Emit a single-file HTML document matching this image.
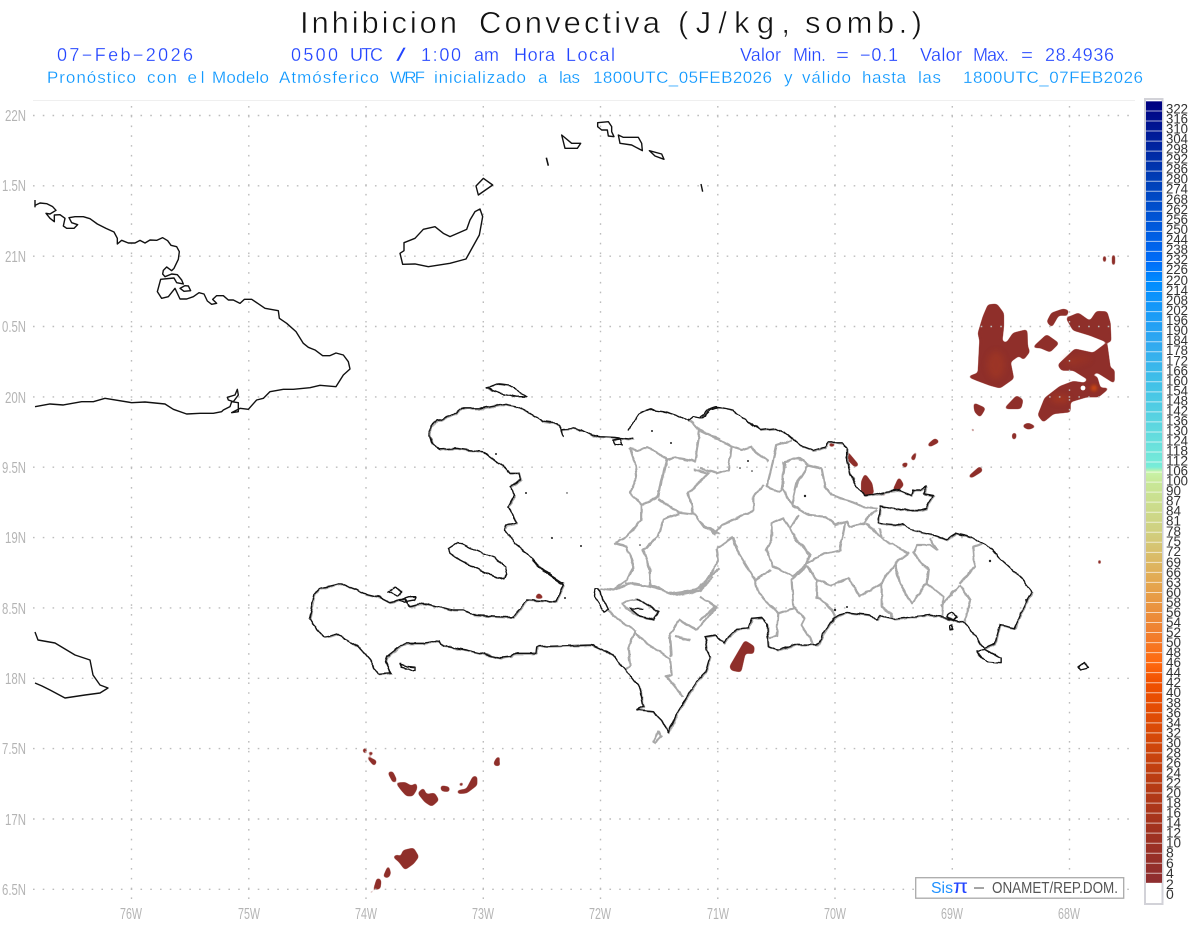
<!DOCTYPE html>
<html><head><meta charset="utf-8"><title>Inhibicion Convectiva</title>
<style>
html,body{margin:0;padding:0;background:#fff;width:1200px;height:927px;overflow:hidden}
svg{display:block;font-family:"Liberation Sans",sans-serif}
path,polygon,polyline,line{vector-effect:non-scaling-stroke}
.k{fill:none;stroke:#111;stroke-width:1.4;stroke-linejoin:round}
.g{fill:none;stroke:#a8a8a8;stroke-width:2.2;stroke-linejoin:round}
.g2{fill:none;stroke:#aaa;stroke-width:1.2;stroke-linejoin:round}
.r polygon{fill:#8f2f2a;stroke:#8f2f2a;stroke-width:1}
.ax text{fill:#b4b4b4;font-size:15.5px}
.cb text{fill:#333;font-size:14px}
.t1 text{font-size:31px;fill:#111;stroke:#fff;stroke-width:.55px}
.t2 text{font-size:18px;fill:#2244ff;stroke:#fff;stroke-width:.25px}
.t3 text{font-size:17px;fill:#0a96ff;stroke:#fff;stroke-width:.25px}
</style></head><body>
<svg width="1200" height="927" viewBox="0 0 1200 927" xmlns="http://www.w3.org/2000/svg">
<defs>
<linearGradient id="bar" x1="0" y1="0" x2="0" y2="1">
<stop offset="0" stop-color="#000080"/>
<stop offset=".103" stop-color="#0040b8"/>
<stop offset=".205" stop-color="#006cf8"/>
<stop offset=".231" stop-color="#008cff"/>
<stop offset=".308" stop-color="#30a8f0"/>
<stop offset=".359" stop-color="#40c0e8"/>
<stop offset=".468" stop-color="#78ecd8"/>
<stop offset=".474" stop-color="#c8f4a8"/>
<stop offset=".487" stop-color="#c8e898"/>
<stop offset=".551" stop-color="#d0d080"/>
<stop offset=".615" stop-color="#e4a850"/>
<stop offset=".679" stop-color="#f08030"/>
<stop offset=".718" stop-color="#ff6a10"/>
<stop offset=".744" stop-color="#f05000"/>
<stop offset=".808" stop-color="#d84a08"/>
<stop offset=".872" stop-color="#b83c14"/>
<stop offset=".936" stop-color="#a03220"/>
<stop offset="1" stop-color="#8e2e30"/>
</linearGradient>
<filter id="bl" x="-50%" y="-50%" width="200%" height="200%"><feGaussianBlur stdDeviation="3"/></filter>
<filter id="bs" x="-50%" y="-50%" width="200%" height="200%"><feGaussianBlur stdDeviation="1.5"/></filter>
<filter id="goo" filterUnits="userSpaceOnUse" x="0" y="0" width="1200" height="927" color-interpolation-filters="sRGB">
<feGaussianBlur stdDeviation="1.6"/>
<feComponentTransfer><feFuncA type="linear" slope="6" intercept="-2.2"/></feComponentTransfer>
</filter>
<filter id="wig" filterUnits="userSpaceOnUse" x="0" y="0" width="1200" height="927" color-interpolation-filters="sRGB">
<feTurbulence type="fractalNoise" baseFrequency=".11" numOctaves="2" seed="4" result="n"/>
<feDisplacementMap in="SourceGraphic" in2="n" scale="3.5" xChannelSelector="R" yChannelSelector="G"/>
</filter>
</defs>

<!-- title -->
<g class="t1">
<text x="300" y="33" textLength="157">Inhibicion</text>
<text x="479" y="33" textLength="181">Convectiva</text>
<text x="678" y="33" textLength="112">(J/kg,</text>
<text x="805" y="33" textLength="117">somb.)</text>
</g>
<g class="t2">
<text x="57" y="61" textLength="136">07−Feb−2026</text>
<text x="291" y="61" textLength="47">0500</text>
<text x="350" y="61" textLength="33">UTC</text>
<text x="396" y="61" textLength="10" lengthAdjust="spacingAndGlyphs">/</text>
<text x="421" y="61" textLength="40">1:00</text>
<text x="474" y="61" textLength="25">am</text>
<text x="514" y="61" textLength="41">Hora</text>
<text x="566" y="61" textLength="49">Local</text>
<text x="740" y="61" textLength="41">Valor</text>
<text x="793" y="61" textLength="33">Min.</text>
<text x="836" y="61" textLength="13" lengthAdjust="spacingAndGlyphs">=</text>
<text x="860" y="61" textLength="38">−0.1</text>
<text x="920" y="61" textLength="42">Valor</text>
<text x="973" y="61" textLength="36">Max.</text>
<text x="1021" y="61" textLength="12" lengthAdjust="spacingAndGlyphs">=</text>
<text x="1045" y="61" textLength="69">28.4936</text>
</g>
<g class="t3">
<text x="47" y="83" textLength="89">Pronóstico</text>
<text x="147" y="83" textLength="30">con</text>
<text x="187.5" y="83" textLength="17">el</text>
<text x="212" y="83" textLength="57">Modelo</text>
<text x="279" y="83" textLength="100">Atmósferico</text>
<text x="390" y="83" textLength="35">WRF</text>
<text x="434" y="83" textLength="92">inicializado</text>
<text x="538" y="83">a</text>
<text x="559" y="83" textLength="21">las</text>
<text x="593" y="83" textLength="179">1800UTC_05FEB2026</text>
<text x="784" y="83">y</text>
<text x="802" y="83" textLength="49">válido</text>
<text x="862" y="83" textLength="44">hasta</text>
<text x="918" y="83" textLength="23">las</text>
<text x="963" y="83" textLength="180">1800UTC_07FEB2026</text>
</g>
<line x1="33" y1="100.5" x2="1135" y2="100.5" stroke="#efefef"/>

<!-- red areas -->
<g class="r" filter="url(#goo)">
<g transform="translate(950,290) scale(.33333)">
<polygon points="56,260 85,250 90,150 85,130 100,80 115,45 140,43 160,70 160,110 155,155 170,160 190,130 230,120 232,170 238,185 220,208 208,195 180,215 190,265 150,293 120,285 80,270"/>
<polygon points="250,172 290,135 325,160 300,185 270,172"/>
<polygon points="292,95 305,70 340,58 355,62 350,75 325,75 305,110"/>
<polygon points="350,85 385,70 420,95 440,65 470,66 480,100 482,155 470,155 420,135 370,120"/>
<polygon points="325,225 375,178 430,190 470,160 480,235 492,240 492,278 440,245 410,265 370,240 335,240"/>
<polygon points="265,375 285,325 330,290 370,275 405,280 420,262 440,260 450,295 475,295 445,320 410,320 360,335 360,365 310,370 280,395"/>
<polygon points="165,355 200,318 218,330 212,355"/>
<polygon points="72,340 105,355 90,380 75,365"/>
<polygon points="220,406 235,400 255,410 235,417"/>
<polygon points="188,430 198,430 196,447 188,447"/>
<polygon points="63,416 73,418 70,426"/>
</g>
<g transform="translate(700,380) scale(.33333)">
<polygon points="970,140 985,132 1005,140 985,147"/>
<polygon points="683,195 705,176 717,185 690,199"/>
<polygon points="633,235 650,213 642,242"/>
<polygon points="605,252 624,248 615,264"/>
<polygon points="806,290 840,260 847,272 815,292"/>
<polygon points="441,215 475,255 465,260 440,235"/>
<polygon points="485,305 495,283 515,310 520,340 497,347 485,335"/>
<polygon points="580,330 597,293 610,315 595,330"/>
<polygon points="543,344 555,338 555,347"/>
<polygon points="388,191 404,191 402,198 388,198"/>
<polygon points="90,860 125,800 135,783 162,800 160,820 135,818 122,875 95,870"/>
</g>
<g transform="translate(300,560) scale(.33333)"><polygon points="706,114 716,100 730,114"/></g>
<g transform="translate(340,730) scale(.33333)">
<polygon points="68,60 79,53 76,72"/><polygon points="86,66 100,68 92,77"/>
<polygon points="80,80 109,93 103,107"/>
<polygon points="145,128 157,125 169,150 160,157"/>
<polygon points="170,160 195,158 215,170 228,160 230,175 218,197 200,197 185,180"/>
<polygon points="235,190 250,175 258,195 283,190 295,210 275,228 255,215"/>
<polygon points="303,168 327,172 327,184 305,182"/>
<polygon points="352,183 380,178 400,140 410,140 410,165 380,188 355,190"/>
<polygon points="356,162 370,158 365,169"/>
<polygon points="462,100 472,82 480,82 475,92 480,106 465,106"/>
<polygon points="160,380 175,375 180,390 190,362 220,355 235,380 220,400 195,418 178,395"/>
<polygon points="131,440 145,408 151,430 145,442"/>
<polygon points="102,478 112,445 122,450 120,475"/>
<polygon points="88,487 100,482 94,490"/>
</g>
<polygon points="1103.5,256 1105.5,256 1105.5,262 1103.5,262"/>
<polygon points="1112.5,255 1114.5,255 1114.5,265 1112.5,265"/>
<polygon points="1098.5,560 1100.5,560 1100.5,564 1098.5,564"/>
</g>
<g filter="url(#bl)" style="opacity:.5">
<ellipse cx="996" cy="365" rx="9" ry="14" fill="#a83a20"/>
<ellipse cx="1074" cy="361" rx="9" ry="4" fill="#a83a20"/>
<ellipse cx="1060" cy="399" rx="9" ry="4" fill="#b53c1c"/>
<ellipse cx="1082" cy="359" rx="8" ry="4" fill="#a03520"/>
</g>
<ellipse cx="1094" cy="388" rx="3" ry="3" fill="#d04810" filter="url(#bs)"/>
<circle cx="1083" cy="388" r="2.4" fill="#fff"/>

<!-- grid -->
<g stroke="#bcbcbc" stroke-width="1.4" fill="none" stroke-dasharray="1.6 8.17">
<path d="M33 115.5H1137M33 185.8H1137M33 256.2H1137M33 326.5H1137M33 396.9H1137M33 467.2H1137M33 537.6H1137M33 607.9H1137M33 678.3H1137M33 748.6H1137M33 819H1137M33 889.3H1137"/>
<path d="M131.5 106V905M248.8 106V905M366 106V905M483.3 106V905M600.5 106V905M717.8 106V905M835 106V905M952.3 106V905M1069.5 106V905"/>
</g>

<!-- coastlines: Cuba, Jamaica, Bahamas -->
<g class="k" transform="translate(0,100) scale(.33333)">
<polyline points="105,300 105,322"/>
<polyline points="105,316 120,309 140,311 158,320 168,331 150,342 138,340 150,355 163,365 163,345 180,344 195,355 190,378 200,385 222,385 233,374 215,368 207,353 225,350 250,350 270,356 292,372 318,385 342,396 352,415 352,432 365,421 385,429 405,429 420,421 435,429 450,420 470,421 488,413 503,422 513,436 530,440 538,455 535,478 522,505 515,512 500,501 490,511 488,522 495,530 515,522 532,524 545,540 550,552 530,548 522,534 482,538 472,575 485,595 505,590 525,565 540,597 560,597 580,590 597,578 612,582 622,603 635,613 650,610 638,598 650,587 670,587 685,600 700,600 720,610 733,598 755,598 773,610 795,625 835,632 838,655 860,670 888,695 910,730 925,742 945,750 968,767 990,767 1008,759 1030,765 1045,785 1050,807 1030,825 1008,860 960,856 930,863 880,868 850,868 810,875 790,895 770,900 745,928 720,925 695,938 715,935 715,908 695,905 690,920 670,930 665,935 640,940 600,940 560,942 520,928 495,912 435,906 395,908 315,895 280,905 245,905 190,915 150,912 105,920"/>
<polygon points="682,892 705,885 712,868 715,885 700,905 685,900"/>
<polygon points="540,565 555,557 565,558 572,572 552,574"/>
</g>
<polyline class="k" points="35,632 38,640 55,643 75,655 90,660 93,675 100,685 108,688 100,693 85,695 65,698 50,690 42,686 35,683"/>
<g class="k" transform="translate(390,110) scale(.33333)">
<polygon points="30,430 42,422 42,398 75,385 100,358 135,350 160,370 180,380 230,358 240,330 255,305 270,297 278,320 268,375 228,447 180,460 115,470 75,462 38,463"/>
<polygon points="258,228 280,205 308,225 265,255"/>
<polygon points="515,75 545,100 572,100 562,115 525,115"/>
<polygon points="623,38 655,35 665,50 665,65 672,80 655,78 652,60 635,60 623,50"/>
<polygon points="685,75 700,82 745,82 755,100 757,122 725,105 690,100"/>
<polygon points="778,122 815,132 822,148 795,138"/>
<polyline points="469,143 475,167" stroke-width="1.6"/>
<polyline points="933,222 938,245"/>
</g>

<g filter="url(#wig)">
<!-- province borders -->
<g class="g">
<g transform="translate(400,380) scale(.33333)">
<polyline points="690,205 705,250 710,290 690,335 725,375 725,420 680,470 645,490 680,500 700,560 680,600 640,630 600,625"/>
<polyline points="690,205 710,212 740,203 770,215 800,240 830,235 860,240 885,245 900,150"/>
<polyline points="865,122 900,150 960,178"/>
<polyline points="800,240 785,300 775,350 725,375"/>
<polyline points="775,355 830,395 880,400 910,440 960,462"/>
<polyline points="835,400 790,420 775,470 730,510 750,570 750,620"/>
<polyline points="885,270 925,280 865,340 880,400"/>
<polyline points="640,630 700,610 750,620 820,640 890,630 930,590 960,565"/>
</g>
<g transform="translate(700,380) scale(.33333)">
<polyline points="0,150 40,170 95,200 125,210 155,200 165,215 205,245"/>
<polyline points="275,180 230,195 220,240 200,320 235,335 245,330 255,245 295,235 325,255 365,265 375,320 395,345 470,370 490,380 530,385"/>
<polyline points="325,255 290,310 275,375"/>
<polyline points="250,245 250,330 275,375 330,405 375,410 405,435 440,425 450,440 495,430 510,405 530,390"/>
<polyline points="95,200 85,270 50,280 0,265"/>
<polyline points="190,315 160,350 160,390 110,415 65,435 45,460 0,425"/>
<polyline points="295,405 270,445 285,475 330,525 320,550 375,520 420,510 435,430"/>
<polyline points="270,445 250,415 215,430 215,480 200,510 220,560 280,590 320,550"/>
<polyline points="215,570 165,600 110,510 100,470"/>
<polyline points="165,600 175,640 235,700 280,685 275,600 320,560 350,600 395,615 445,595 480,650 545,610 585,550 625,520 545,475 500,430"/>
<polyline points="585,550 600,610 635,670 680,610 685,570 640,520 650,495 690,495 710,510 690,475"/>
<polyline points="680,610 730,650 725,710"/>
<polyline points="545,610 545,680 575,700 575,718"/>
<polyline points="780,615 720,680"/>
<polyline points="780,615 810,660 795,725"/>
<polyline points="780,610 825,560 820,500 850,490"/>
<polyline points="235,700 230,770 205,775"/>
<polyline points="280,680 315,715 305,735 340,790"/>
<polyline points="350,600 350,650 395,690 405,710"/>
<polyline points="50,505 55,540 40,570 0,630"/>
<polyline points="100,470 50,505"/>
<polyline points="0,650 45,680 0,720"/>
<polyline points="545,475 540,445"/>
</g>
<g transform="translate(300,560) scale(.33333)">
<polyline points="925,150 950,175 1005,212 985,265 990,315 975,330"/>
<polyline points="1000,215 1040,250 1110,295 1115,345 1100,350 1150,410"/>
<polyline points="975,70 1060,80 1130,105 1200,92 1240,50"/>
<polyline points="1190,210 1140,180 1110,220 1115,290"/>
<polyline points="1170,240 1125,228"/>
<polyline points="1190,210 1250,140"/>
<polyline points="965,130 1010,118 1075,155 1060,178 1020,170 985,150 965,130"/>
<polygon points="1060,545 1075,515 1085,530 1065,548"/>
</g>
</g>

<!-- Hispaniola coast: gray double -->
<g class="g2" transform="translate(.9,.9)">
<g transform="translate(400,380) scale(.33333)"><polyline points="88,170 95,140 110,122 150,108 185,85 250,85 315,72 350,80 390,98 430,125 470,130 485,150 520,145 545,150 575,165 600,170 640,172 700,178"/><polyline points="490,610 460,590 430,570 400,540 370,510 345,490 315,450 320,435 350,430 325,380 345,345 330,320 360,300 355,280 330,280 310,260 250,215 205,210 170,205 120,208 95,190 88,170"/></g>
<g transform="translate(700,380) scale(.33333)"><polyline points="0,112 25,88 50,80 100,90 135,118 180,150 230,145 265,165 300,195 340,210 375,200 385,187 425,187 440,205 440,240 450,280 470,320 495,348 520,345 560,335 600,330 635,345 640,330 660,330 680,320 670,340 700,345 680,385 660,390 610,390 540,378 535,430 600,435 610,432 630,450 700,465 740,478 770,460 820,475 860,495 900,535 960,590 995,635 975,670 945,745 900,735 885,790 850,805 820,760 790,725 740,715 690,705 640,710 580,718 540,705 530,722 510,705 435,697 400,715 350,795 290,793 230,810 205,800 200,730 185,712 155,715 145,745 110,748 70,788 45,765 15,770 20,810 30,830 15,880 0,895"/></g>
<g transform="translate(300,560) scale(.33333)"><polyline points="1200,350 1170,395 1130,460 1105,518 1085,480 1060,455 1010,450 1030,440 1020,385 990,345 965,320 940,285 875,255 710,260 708,280 640,280 630,290 600,293 500,270 430,258 420,240 370,250 320,250 305,255 260,290 255,305 272,340 235,343 210,300 175,260 130,235 110,222 75,232 35,190 28,178 45,100 60,85 125,70 160,85 190,100 240,112 270,128 315,115 330,140 370,130 460,150 490,150 520,165 590,170 640,172 680,120 770,125 785,85 790,75 740,40 695,0"/></g>
</g>
<!-- Hispaniola coast: black -->
<g class="k">
<g transform="translate(400,380) scale(.33333)">
<polyline points="88,170 95,140 110,122 150,108 185,85 250,85 315,72 350,80 390,98 430,125 470,130 485,150 490,170 483,150 520,145 545,150 575,165 600,170 640,172 700,178"/>
<polyline points="685,150 715,105 730,95 750,88 800,95 830,105 865,122 880,110 905,115 930,90 960,82"/>
<polyline points="490,610 460,590 430,570 400,540 370,510 345,490 315,450 320,435 350,430 325,380 345,345 330,320 360,300 355,280 330,280 310,260 250,215 205,210 170,205 120,208 95,190 88,170"/>
<polygon points="145,505 175,485 215,505 285,535 315,560 320,585 312,598 240,572 180,540 150,520"/>
<polygon points="260,25 300,13 330,17 380,50 350,50 300,40"/>
<polygon points="640,180 660,175 665,195 645,192"/>
</g>
<g transform="translate(700,380) scale(.33333)">
<polyline points="0,112 25,88 50,80 100,90 135,118 180,150 230,145 265,165 300,195 340,210 375,200 385,187 425,187 440,205 440,240 450,280 470,320 495,348 520,345 560,335 600,330 635,345 640,330 660,330 680,320 670,340 700,345 680,385 660,390 610,390 540,378 535,430 600,435 610,432 630,450 700,465 740,478 770,460 820,475 860,495 900,535 960,590 995,635 975,670 945,745 900,735 885,790 850,805 820,760 790,725 740,715 690,705 640,710 580,718 540,705 530,722 510,705 435,697 400,715 350,795 290,793 230,810 205,800 200,730 185,712 155,715 145,745 110,748 70,788 45,765 15,770 20,810 30,830 15,880 0,895"/>
<polygon points="830,815 850,808 905,835 905,848 860,845"/>
<polygon points="745,705 755,697 770,710 760,720 742,710"/>
<polygon points="748,737 755,735 760,750 750,750"/>
</g>
<g transform="translate(300,560) scale(.33333)">
<polyline points="1200,350 1170,395 1130,460 1105,518 1085,480 1060,455 1010,450 1030,440 1020,385 990,345 965,320 940,285 875,255 710,260 708,280 640,280 630,290 600,293 500,270 430,258 420,240 370,250 320,250 305,255 260,290 255,305 272,340 235,343 210,300 175,260 130,235 110,222 75,232 35,190 28,178 45,100 60,85 125,70 160,85 190,100 240,112 270,128 315,115 330,140 370,130 460,150 490,150 520,165 590,170 640,172 680,120 770,125 785,85 790,75 740,40 695,0"/>
<polygon points="265,95 285,83 305,95 290,108"/>
<polygon points="295,120 325,110 350,110 345,120 315,125"/>
<polygon points="300,310 320,318 345,320 345,330 320,325 305,320"/>
<polygon points="885,85 895,85 925,148 912,155 882,110"/>
<polyline points="1010,118 1075,155 1060,178 1020,170 990,145 1030,148"/>
</g>
<polygon points="1078,667 1085,662 1088,668 1080,670"/>
</g>
</g>

<!-- specks -->
<g fill="#222">
<circle cx="496" cy="454" r="1"/><circle cx="526" cy="493" r="1"/><circle cx="552" cy="538" r="1"/><circle cx="581" cy="546" r="1"/><circle cx="567" cy="493" r=".7"/><circle cx="565" cy="598" r="1"/><circle cx="652" cy="431" r="1"/><circle cx="671" cy="443" r="1"/><circle cx="748" cy="461" r="1"/><circle cx="740" cy="468" r=".8"/><circle cx="752" cy="471" r=".8"/><circle cx="805" cy="496" r="1.2"/><circle cx="990" cy="561" r="1.2"/><circle cx="1026" cy="600" r="1"/><circle cx="835" cy="610" r="1.2"/><circle cx="847" cy="607" r="1"/><circle cx="640" cy="545" r=".8"/>
</g>

<!-- axes -->
<g class="ax">
<text x="5" y="121" textLength="21" lengthAdjust="spacingAndGlyphs">22N</text>
<text x="2" y="191" textLength="24" lengthAdjust="spacingAndGlyphs">1.5N</text>
<text x="5" y="262" textLength="21" lengthAdjust="spacingAndGlyphs">21N</text>
<text x="2" y="332" textLength="24" lengthAdjust="spacingAndGlyphs">0.5N</text>
<text x="5" y="403" textLength="21" lengthAdjust="spacingAndGlyphs">20N</text>
<text x="2" y="473" textLength="24" lengthAdjust="spacingAndGlyphs">9.5N</text>
<text x="5" y="543" textLength="21" lengthAdjust="spacingAndGlyphs">19N</text>
<text x="2" y="614" textLength="24" lengthAdjust="spacingAndGlyphs">8.5N</text>
<text x="5" y="684" textLength="21" lengthAdjust="spacingAndGlyphs">18N</text>
<text x="2" y="754" textLength="24" lengthAdjust="spacingAndGlyphs">7.5N</text>
<text x="5" y="825" textLength="21" lengthAdjust="spacingAndGlyphs">17N</text>
<text x="2" y="895" textLength="24" lengthAdjust="spacingAndGlyphs">6.5N</text>
<text x="120" y="919" textLength="22" lengthAdjust="spacingAndGlyphs">76W</text>
<text x="238" y="919" textLength="22" lengthAdjust="spacingAndGlyphs">75W</text>
<text x="355" y="919" textLength="22" lengthAdjust="spacingAndGlyphs">74W</text>
<text x="472" y="919" textLength="22" lengthAdjust="spacingAndGlyphs">73W</text>
<text x="589" y="919" textLength="22" lengthAdjust="spacingAndGlyphs">72W</text>
<text x="707" y="919" textLength="22" lengthAdjust="spacingAndGlyphs">71W</text>
<text x="824" y="919" textLength="22" lengthAdjust="spacingAndGlyphs">70W</text>
<text x="941" y="919" textLength="22" lengthAdjust="spacingAndGlyphs">69W</text>
<text x="1058" y="919" textLength="22" lengthAdjust="spacingAndGlyphs">68W</text>
</g>

<!-- credit -->
<rect x="915.7" y="877.7" width="208" height="20.5" fill="#fff" stroke="#aaa" stroke-width="1.3"/>
<text x="931" y="893" font-size="15.5" fill="#1e90ff" textLength="22" lengthAdjust="spacingAndGlyphs">Sis</text>
<text x="953" y="893" font-size="19" fill="#2244ff" textLength="15" lengthAdjust="spacingAndGlyphs">π</text>
<text x="973" y="893" font-size="15" fill="#555" textLength="12" lengthAdjust="spacingAndGlyphs">−</text>
<text x="992" y="893" font-size="15.5" fill="#555" textLength="126" lengthAdjust="spacingAndGlyphs">ONAMET/REP.DOM.</text>

<!-- colorbar -->
<rect x="1145" y="99" width="17.5" height="805" fill="#fff" stroke="#d2d2d8" stroke-width="2"/>
<rect x="1146" y="101" width="16" height="782" fill="url(#bar)"/>
<line x1="1154" y1="101" x2="1154" y2="883" stroke="#fff" stroke-opacity=".65" stroke-width="16" stroke-dasharray="1 9.03" stroke-dashoffset="-9.5"/>
<g class="cb" transform="translate(1166,-1.84) scale(1,1.003)">
<text y="115" textLength="22" lengthAdjust="spacingAndGlyphs">322</text>
<text y="125" textLength="22" lengthAdjust="spacingAndGlyphs">316</text>
<text y="135" textLength="22" lengthAdjust="spacingAndGlyphs">310</text>
<text y="145" textLength="22" lengthAdjust="spacingAndGlyphs">304</text>
<text y="155" textLength="22" lengthAdjust="spacingAndGlyphs">298</text>
<text y="165" textLength="22" lengthAdjust="spacingAndGlyphs">292</text>
<text y="175" textLength="22" lengthAdjust="spacingAndGlyphs">286</text>
<text y="185" textLength="22" lengthAdjust="spacingAndGlyphs">280</text>
<text y="195" textLength="22" lengthAdjust="spacingAndGlyphs">274</text>
<text y="205" textLength="22" lengthAdjust="spacingAndGlyphs">268</text>
<text y="215" textLength="22" lengthAdjust="spacingAndGlyphs">262</text>
<text y="225" textLength="22" lengthAdjust="spacingAndGlyphs">256</text>
<text y="235" textLength="22" lengthAdjust="spacingAndGlyphs">250</text>
<text y="245" textLength="22" lengthAdjust="spacingAndGlyphs">244</text>
<text y="255" textLength="22" lengthAdjust="spacingAndGlyphs">238</text>
<text y="265" textLength="22" lengthAdjust="spacingAndGlyphs">232</text>
<text y="275" textLength="22" lengthAdjust="spacingAndGlyphs">226</text>
<text y="286" textLength="22" lengthAdjust="spacingAndGlyphs">220</text>
<text y="296" textLength="22" lengthAdjust="spacingAndGlyphs">214</text>
<text y="306" textLength="22" lengthAdjust="spacingAndGlyphs">208</text>
<text y="316" textLength="22" lengthAdjust="spacingAndGlyphs">202</text>
<text y="326" textLength="22" lengthAdjust="spacingAndGlyphs">196</text>
<text y="336" textLength="22" lengthAdjust="spacingAndGlyphs">190</text>
<text y="346" textLength="22" lengthAdjust="spacingAndGlyphs">184</text>
<text y="356" textLength="22" lengthAdjust="spacingAndGlyphs">178</text>
<text y="366" textLength="22" lengthAdjust="spacingAndGlyphs">172</text>
<text y="376" textLength="22" lengthAdjust="spacingAndGlyphs">166</text>
<text y="386" textLength="22" lengthAdjust="spacingAndGlyphs">160</text>
<text y="396" textLength="22" lengthAdjust="spacingAndGlyphs">154</text>
<text y="406" textLength="22" lengthAdjust="spacingAndGlyphs">148</text>
<text y="416" textLength="22" lengthAdjust="spacingAndGlyphs">142</text>
<text y="426" textLength="22" lengthAdjust="spacingAndGlyphs">136</text>
<text y="436" textLength="22" lengthAdjust="spacingAndGlyphs">130</text>
<text y="446" textLength="22" lengthAdjust="spacingAndGlyphs">124</text>
<text y="456" textLength="22" lengthAdjust="spacingAndGlyphs">118</text>
<text y="466" textLength="22" lengthAdjust="spacingAndGlyphs">112</text>
<text y="476" textLength="22" lengthAdjust="spacingAndGlyphs">106</text>
<text y="486" textLength="22" lengthAdjust="spacingAndGlyphs">100</text>
<text y="496" textLength="15" lengthAdjust="spacingAndGlyphs">90</text>
<text y="506" textLength="15" lengthAdjust="spacingAndGlyphs">87</text>
<text y="516" textLength="15" lengthAdjust="spacingAndGlyphs">84</text>
<text y="526" textLength="15" lengthAdjust="spacingAndGlyphs">81</text>
<text y="536" textLength="15" lengthAdjust="spacingAndGlyphs">78</text>
<text y="546" textLength="15" lengthAdjust="spacingAndGlyphs">75</text>
<text y="556" textLength="15" lengthAdjust="spacingAndGlyphs">72</text>
<text y="567" textLength="15" lengthAdjust="spacingAndGlyphs">69</text>
<text y="577" textLength="15" lengthAdjust="spacingAndGlyphs">66</text>
<text y="587" textLength="15" lengthAdjust="spacingAndGlyphs">63</text>
<text y="597" textLength="15" lengthAdjust="spacingAndGlyphs">60</text>
<text y="607" textLength="15" lengthAdjust="spacingAndGlyphs">58</text>
<text y="617" textLength="15" lengthAdjust="spacingAndGlyphs">56</text>
<text y="627" textLength="15" lengthAdjust="spacingAndGlyphs">54</text>
<text y="637" textLength="15" lengthAdjust="spacingAndGlyphs">52</text>
<text y="647" textLength="15" lengthAdjust="spacingAndGlyphs">50</text>
<text y="657" textLength="15" lengthAdjust="spacingAndGlyphs">48</text>
<text y="667" textLength="15" lengthAdjust="spacingAndGlyphs">46</text>
<text y="677" textLength="15" lengthAdjust="spacingAndGlyphs">44</text>
<text y="687" textLength="15" lengthAdjust="spacingAndGlyphs">42</text>
<text y="697" textLength="15" lengthAdjust="spacingAndGlyphs">40</text>
<text y="707" textLength="15" lengthAdjust="spacingAndGlyphs">38</text>
<text y="717" textLength="15" lengthAdjust="spacingAndGlyphs">36</text>
<text y="727" textLength="15" lengthAdjust="spacingAndGlyphs">34</text>
<text y="737" textLength="15" lengthAdjust="spacingAndGlyphs">32</text>
<text y="747" textLength="15" lengthAdjust="spacingAndGlyphs">30</text>
<text y="757" textLength="15" lengthAdjust="spacingAndGlyphs">28</text>
<text y="767" textLength="15" lengthAdjust="spacingAndGlyphs">26</text>
<text y="777" textLength="15" lengthAdjust="spacingAndGlyphs">24</text>
<text y="787" textLength="15" lengthAdjust="spacingAndGlyphs">22</text>
<text y="797" textLength="15" lengthAdjust="spacingAndGlyphs">20</text>
<text y="807" textLength="15" lengthAdjust="spacingAndGlyphs">18</text>
<text y="817" textLength="15" lengthAdjust="spacingAndGlyphs">16</text>
<text y="827" textLength="15" lengthAdjust="spacingAndGlyphs">14</text>
<text y="837" textLength="15" lengthAdjust="spacingAndGlyphs">12</text>
<text y="847" textLength="15" lengthAdjust="spacingAndGlyphs">10</text>
<text y="857">8</text>
<text y="867">6</text>
<text y="877">4</text>
<text y="888">2</text>
<text y="898">0</text>
</g>
</svg>
</body></html>
